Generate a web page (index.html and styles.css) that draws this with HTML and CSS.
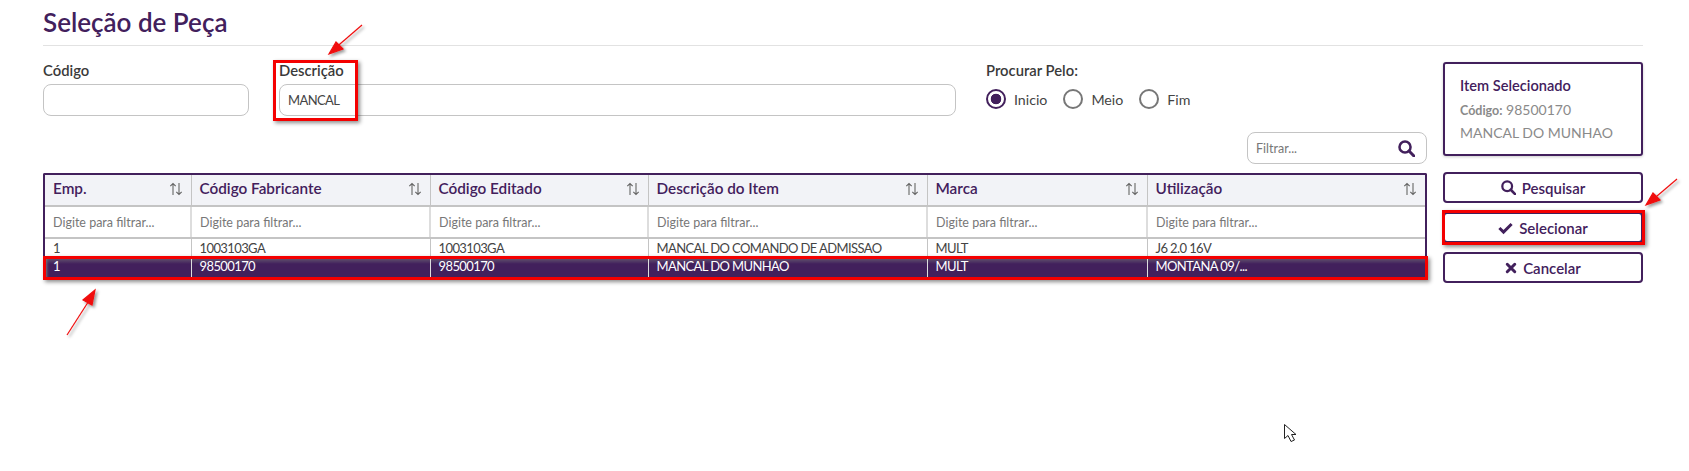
FILE: index.html
```html
<!DOCTYPE html>
<html lang="pt-BR">
<head>
<meta charset="utf-8">
<title>Seleção de Peça</title>
<link rel="stylesheet" href="styles.css">
</head>
<body>
<svg width="0" height="0" class="defs">
  <symbol id="sort" viewBox="0 0 14 14"><path d="M4 13V1.5M1.3 4.2L4 1.5l2.7 2.7M10 1v11.5M7.3 9.8l2.7 2.7 2.7-2.7" fill="none" stroke="currentColor" stroke-width="1.1"/></symbol>
  <symbol id="search" viewBox="0 0 16 16"><circle cx="6.6" cy="6.6" r="5.2" fill="none" stroke="currentColor" stroke-width="2.4"/><path d="M10.4 10.4L15 15" fill="none" stroke="currentColor" stroke-width="2.8" stroke-linecap="round"/></symbol>
</svg>
<main class="page">
  <h1 class="title">Seleção de Peça</h1>
  <div class="content">
    <section class="main">
      <div class="fields">
        <div class="field code">
          <label class="label">Código</label>
          <input class="input" type="text">
        </div>
        <div class="field desc">
          <label class="label">Descrição</label>
          <input class="input" type="text" value="MANCAL">
        </div>
        <div class="field search-mode">
          <span class="label">Procurar Pelo:</span>
          <div class="radios">
            <span class="radio"><i class="dot on"></i>Inicio</span>
            <span class="radio"><i class="dot"></i>Meio</span>
            <span class="radio"><i class="dot"></i>Fim</span>
          </div>
        </div>
      </div>
      <div class="filter-bar">
        <div class="filter">
          <input class="filter-input" type="text" placeholder="Filtrar...">
          <svg class="filter-icon"><use href="#search"/></svg>
        </div>
      </div>
      <div class="table-wrap">
        <table class="grid">
          <colgroup>
            <col class="c1"><col class="c2"><col class="c3"><col class="c4"><col class="c5"><col class="c6">
          </colgroup>
          <thead>
            <tr class="head">
              <th><div class="th"><span>Emp.</span><svg class="sort"><use href="#sort"/></svg></div></th>
              <th><div class="th"><span>Código Fabricante</span><svg class="sort"><use href="#sort"/></svg></div></th>
              <th><div class="th"><span>Código Editado</span><svg class="sort"><use href="#sort"/></svg></div></th>
              <th><div class="th"><span>Descrição do Item</span><svg class="sort"><use href="#sort"/></svg></div></th>
              <th><div class="th"><span>Marca</span><svg class="sort"><use href="#sort"/></svg></div></th>
              <th><div class="th"><span>Utilização</span><svg class="sort"><use href="#sort"/></svg></div></th>
            </tr>
            <tr class="filters">
              <td><input class="cell-input" placeholder="Digite para filtrar..."></td>
              <td><input class="cell-input" placeholder="Digite para filtrar..."></td>
              <td><input class="cell-input" placeholder="Digite para filtrar..."></td>
              <td><input class="cell-input" placeholder="Digite para filtrar..."></td>
              <td><input class="cell-input" placeholder="Digite para filtrar..."></td>
              <td><input class="cell-input" placeholder="Digite para filtrar..."></td>
            </tr>
          </thead>
          <tbody>
            <tr class="row">
              <td>1</td><td>1003103GA</td><td>1003103GA</td><td>MANCAL DO COMANDO DE ADMISSAO</td><td>MULT</td><td>J6 2.0 16V</td>
            </tr>
            <tr class="row selected">
              <td>1</td><td>98500170</td><td>98500170</td><td>MANCAL DO MUNHAO</td><td>MULT</td><td>MONTANA 09/...</td>
            </tr>
          </tbody>
        </table>
      </div>
    </section>
    <aside class="side">
      <div class="picked">
        <div class="picked-title">Item Selecionado</div>
        <div class="picked-line"><b>Código:</b> 98500170</div>
        <div class="picked-line">MANCAL DO MUNHAO</div>
      </div>
      <div class="actions">
        <button class="btn"><svg class="btn-icon"><use href="#search"/></svg>Pesquisar</button>
        <button class="btn"><svg class="btn-icon" viewBox="0 0 16 16"><path d="M1.5 8.5l4.4 4.4L14.5 4.2" fill="none" stroke="currentColor" stroke-width="3.2"/></svg>Selecionar</button>
        <button class="btn"><svg class="btn-icon small" viewBox="0 0 16 16"><path d="M3 3l10 10M13 3L3 13" fill="none" stroke="currentColor" stroke-width="4" stroke-linecap="round"/></svg>Cancelar</button>
      </div>
    </aside>
  </div>
</main>

<div class="mark mark-desc"></div>
<div class="mark mark-row"></div>
<div class="mark mark-btn"></div>
<svg class="arrows" width="1689" height="471" viewBox="0 0 1689 471">
  <defs>
    <filter id="sh" x="-50%" y="-50%" width="200%" height="200%"><feDropShadow dx="2" dy="2" stdDeviation="1.5" flood-color="#000" flood-opacity=".4"/></filter>
  </defs>
  <g filter="url(#sh)" fill="#f01010" stroke="#f01010" stroke-width="1.2">
    <path d="M362 25L333 50"/><path d="M329 54L343 49 336 42Z"/>
    <path d="M67 335L92 296"/><path d="M95 290L83 300 92 305Z"/>
    <path d="M1677 179L1650 202"/><path d="M1646 205L1660 200 1653 193Z"/>
  </g>
  <path class="cursor" d="M1284.5 424.5V438.5L1288 435.5L1291 441.5L1294.5 440L1291.5 434.5H1296Z"/>
</svg>
</body>
</html>
```
FILE: styles.css
```css
* { box-sizing: border-box; }
html, body { margin: 0; padding: 0; background: #fff; }
body {
  width: 1689px;
  height: 471px;
  overflow: hidden;
  position: relative;
  font-family: "Lato", "Noto Sans", sans-serif;
  color: #444;
}
.defs { position: absolute; }
.page { width: 1600px; margin-left: 43px; }
.title {
  margin: 0;
  height: 46px;
  padding-top: 7px;
  font-size: 26px;
  line-height: 30px;
  font-weight: 600;
  color: #42205c;
  border-bottom: 1px solid #e2e2e2;
}
.content { display: flex; gap: 16px; padding-top: 16px; }
.main { width: 1384px; }
.side { width: 200px; }

.fields { display: flex; gap: 30px; margin-top: -1px; }
.field { display: flex; flex-direction: column; gap: 5px; }
.code { width: 206px; }
.desc { width: 677px; }
.label { font-size: 14.8px; line-height: 18px; font-weight: 600; color: #3a3a3a; }
.input {
  height: 32px;
  width: 100%;
  border: 1px solid #c4c4c4;
  border-radius: 8px;
  padding: 0 8px;
  font: 13px "Lato", sans-serif;
  letter-spacing: -.6px;
  color: #444;
  background: #fff;
}
.radios { display: flex; gap: 16px; height: 32px; align-items: center; margin-top: -1px; }
.radio { display: flex; align-items: center; gap: 8px; font-size: 14.2px; color: #444; }
.dot {
  width: 20px; height: 20px; border-radius: 50%;
  border: 2px solid #777; background: #fff; display: block;
}
.dot.on { border-color: #42205c; background: radial-gradient(circle, #42205c 0 5px, #fff 5.6px); }

.filter-bar { display: flex; justify-content: flex-end; margin-top: 16px; }
.filter {
  width: 180px; height: 32px;
  border: 1px solid #c4c4c4; border-radius: 8px;
  display: flex; align-items: center; padding: 0 11px 0 8px;
}
.filter-input { flex: 1; min-width: 0; border: 0; outline: 0; padding: 0; font: 12.5px "Lato", sans-serif; }
.filter-input::placeholder { color: #777; }
.filter-icon { width: 17px; height: 17px; color: #42205c; }

.table-wrap { margin-top: 9px; border: 2px solid #42205c; border-bottom-width: 0; height: 106px; border-radius: 2px 2px 0 0; }
.grid { width: 1380px; table-layout: fixed; border-collapse: collapse; }
.c1 { width: 146px; } .c2 { width: 239px; } .c3 { width: 218px; }
.c4 { width: 279px; } .c5 { width: 220px; } .c6 { width: 278px; }
.head th {
  height: 31px; padding: 0 8px 2px; background: #f2f3f7;
  border-bottom: 2px solid #c4c4c4; border-left: 1px solid #c4c4c4;
  font-size: 15.3px; font-weight: 600; color: #42205c; text-align: left;
}
.head th:first-child, .filters td:first-child, .row td:first-child { border-left: 0; }
.th { display: flex; justify-content: space-between; align-items: center; }
.th span { margin-top: -2px; }
.sort { width: 14px; height: 14px; color: #666; }
.filters td { height: 32px; padding: 0; border-left: 2px solid #ddd; border-bottom: 2px solid #c4c4c4; }
.cell-input { width: 100%; height: 28px; border: 0; outline: 0; padding: 0 8px; font: 12.5px "Lato", sans-serif; background: transparent; }
.cell-input::placeholder { color: #777; }
.row td {
  height: 19px; padding: 0 8px; font-size: 13px; line-height: 16px; letter-spacing: -.6px;
  border-left: 1px solid #c4c4c4; color: #444; white-space: nowrap; overflow: hidden;
}
.selected td {
  height: 22px; padding-bottom: 4px; color: #fff; border-left-color: #ddd;
  background: linear-gradient(#6a5f72 0, #42205c 7px);
}
.selected td:first-child { box-shadow: inset 5px 0 3px -3px #777; }

.picked {
  height: 94px; border: 2px solid #42205c; border-radius: 3px;
  padding: 12px 15px 0; box-shadow: 0 1px 3px rgba(0,0,0,.2);
}
.picked-title { font-size: 14.6px; line-height: 20px; font-weight: 600; color: #42205c; margin-bottom: 3px; }
.picked-line { font-size: 14px; line-height: 22px; color: #8a8a8a; }
.picked-line b { font-size: 12.5px; }
.actions { display: flex; flex-direction: column; gap: 9px; margin-top: 16px; }
.btn {
  height: 31px; width: 200px; background: #fff;
  border: 2px solid #42205c; border-radius: 4px;
  font: 600 15px "Lato", sans-serif; color: #42205c;
  display: flex; align-items: center; justify-content: center; gap: 6px; padding: 0;
}
.btn-icon { width: 15px; height: 15px; }
.btn-icon.small { width: 12px; height: 12px; }

.mark { position: absolute; border: 3px solid #f40000; box-shadow: 2px 2px 4px rgba(0,0,0,.45); }
.mark-desc { left: 273px; top: 60px; width: 85px; height: 61px; }
.mark-row { left: 43px; top: 256px; width: 1385px; height: 24px; }
.mark-btn { left: 1442px; top: 210px; width: 203px; height: 35px; }
.arrows { position: absolute; left: 0; top: 0; pointer-events: none; }
.cursor { fill: #fff; stroke: #222; stroke-width: 1; }
```
